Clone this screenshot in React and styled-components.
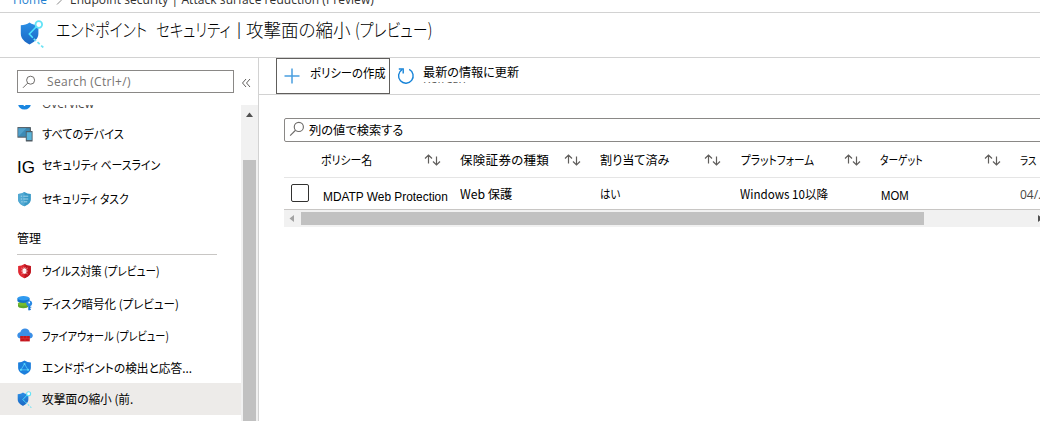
import React from "react";
import styled, { createGlobalStyle, css } from "styled-components";

const Global = createGlobalStyle`
  * { box-sizing: border-box; }
  body { margin: 0; background: #fff; color: #000; overflow: hidden;
    font-family: "Noto Sans CJK JP", sans-serif; font-size: 12px; }
`;

const jp = '"Noto Sans CJK JP", sans-serif';
const arial = '"Liberation Sans", "Noto Sans CJK JP", sans-serif';
const segoe = '"Open Sans", sans-serif';

const Text = styled.span`
  display: inline-block;
  flex: none;
  white-space: nowrap;
  line-height: 20px;
  font-family: ${(p) => p.$font || jp};
  font-size: ${(p) => p.$size || 12}px;
  font-weight: ${(p) => p.$weight || 400};
  letter-spacing: ${(p) => p.$track || 0}px;
  font-feature-settings: "palt";
  color: ${(p) => p.$color || "#000"};
  margin-top: ${(p) => p.$drop || 0}px;
  ${(p) => p.$width && css`width: ${p.$width}px;`}
  ${(p) => p.$squeeze && css`transform: scaleX(${p.$squeeze}); transform-origin: left center;`}
`;

const Page = styled.div`
  width: 1040px;
  height: 421px;
  display: flex;
  flex-direction: column;
  overflow: hidden;
`;

const Breadcrumb = styled.nav`
  height: 13px;
  flex: none;
  display: flex;
  overflow: hidden;
  border-bottom: 1px solid #d2d2d2;
  padding-left: 13px;
  & > * { margin-top: -10px; }
`;

const CrumbArrow = styled.svg`
  width: 6px;
  height: 9px;
  margin: -4px 8px 0 9px;
`;

const Header = styled.header`
  height: 45px;
  flex: none;
  display: flex;
  border-bottom: 1px solid #d2d2d2;
  padding: 7px 0 0 20px;
`;

const Title = styled.h1`
  margin: -1px 0 0 12px;
  font-weight: 400;
  display: flex;
  height: 20px;
`;

const Body = styled.div`
  flex: 1;
  min-height: 0;
  display: flex;
`;

const Sidebar = styled.aside`
  width: 259px;
  flex: none;
  border-right: 1px solid #d2d2d2;
  display: flex;
  flex-direction: column;
`;

const SearchRow = styled.div`
  height: 47px;
  flex: none;
  padding: 12px 0 0 17px;
  display: flex;
`;

const SearchBox = styled.div`
  width: 217px;
  height: 23px;
  border: 1px solid #8a8886;
  display: flex;
  align-items: center;
  padding-left: 4px;
  gap: 11px;
`;

const Collapse = styled.svg`
  width: 10px;
  height: 10px;
  margin: 8px 0 0 7px;
`;

const NavArea = styled.div`
  flex: 1;
  min-height: 0;
  display: flex;
`;

const NavList = styled.div`
  width: 241px;
  flex: none;
  overflow: hidden;
`;

const NavItem = styled.div`
  height: ${(p) => p.$height || 32}px;
  display: flex;
  align-items: center;
  padding-left: 17px;
  background: ${(p) => (p.$active ? "#edebe9" : "transparent")};
  ${(p) => p.$clipped && css`align-items: flex-start; overflow: hidden; & > * { margin-top: -11px; }`}
`;

const IconSlot = styled.span`
  width: 25px;
  height: 20px;
  flex: none;
  display: flex;
  align-items: center;
  & > svg { display: block; }
`;

const Section = styled.div`
  width: 200px;
  height: 39px;
  margin: 0 0 0 17px;
  padding-top: 12px;
  border-bottom: 1px solid #c8c6c4;
`;

const VScroll = styled.div`
  width: 17px;
  background: #f1f1f1;
  display: flex;
  flex-direction: column;
  align-items: center;
  padding-top: 7px;
`;

const VThumb = styled.div`
  width: 13px;
  flex: 1;
  margin-top: 43px;
  background: #c1c1c1;
`;

const Content = styled.main`
  flex: 1;
  min-width: 0;
`;

const Toolbar = styled.div`
  height: 37px;
  display: flex;
  border-bottom: 1px solid #d2d2d2;
  padding-left: 17px;
`;

const CreateButton = styled.div`
  width: 114px;
  height: 36px;
  border: 1px solid #605e5c;
  display: flex;
  align-items: flex-start;
  padding: 4px 0 0 7px;
  & > svg { flex: none; margin: 5px 10px 0 0; }
`;

const RefreshButton = styled.div`
  display: flex;
  align-items: flex-start;
  padding: 4px 0 0 7px;
  & > svg { margin: 5px 8px 0 0; }
`;

const RefreshLabels = styled.div`
  display: flex;
  flex-direction: column;
`;

const Remnant = styled.div`
  height: 2px;
  overflow: hidden;
  display: flex;
  align-items: flex-end;
  & > * { margin-bottom: -5px; }
`;

const Grid = styled.div`
  margin: 23px 0 0 25px;
  overflow: hidden;
`;

const FilterBox = styled.div`
  width: 780px;
  height: 24px;
  border: 1px solid #8a8886;
  border-radius: 2px;
  display: flex;
  align-items: center;
  padding-left: 4px;
  & > svg { margin: -2px 4px 0 0; }
`;

const Row = styled.div`
  width: 780px;
  height: ${(p) => p.$height}px;
  display: flex;
  align-items: center;
  border-bottom: 1px solid ${(p) => p.$line};
`;

const CheckCell = styled.div`
  width: 37px;
  flex: none;
  padding-left: 7px;
`;

const CheckBox = styled.div`
  width: 18px;
  height: 18px;
  margin-top: -1px;
  border: 1px solid #323130;
  border-radius: 2px;
`;

const Cell = styled.div`
  width: ${(p) => p.$width || 140}px;
  flex: none;
  display: flex;
  align-items: center;
  justify-content: space-between;
  padding: 0 19px 0 ${(p) => p.$indent || 0}px;
`;

const HScroll = styled.div`
  width: 780px;
  height: 17px;
  background: #f1f1f1;
  display: flex;
  align-items: center;
  padding-left: 5px;
`;

const HThumb = styled.div`
  width: 623px;
  height: 13px;
  margin: 0 114px 0 7px;
  background: #c1c1c1;
`;

const shieldPath = "M8 .6C6 2 3.6 2.6 1.2 2.7v5.5c0 3.7 3.2 6 6.8 7.6 3.600-1.600 6.800-3.900 6.800-7.600V2.700C12.400 2.600 10 2 8 .6z";

const AttackIcon = ({ width, height, id }) => (
  <svg width={width} height={height} viewBox="0 0 24 28">
    <defs>
      <linearGradient id={id} x2="0" y2="1">
        <stop offset="0" stopColor="#2a8fe6" />
        <stop offset="1" stopColor="#1b68c4" />
      </linearGradient>
    </defs>
    <path d="M9.500 2.500C7 4.300 4 5 .8 5.200v8.300c0 5.300 4.200 8.700 8.700 11 4.500-2.300 8.900-5.700 8.900-11V5.200C15.200 5 12 4.300 9.500 2.500z" fill={`url(#${id})`} />
    <path d="M16.300 6.800 9.300 14l3.500 3.800" fill="none" stroke="#50e6ff" strokeWidth="1.500" />
    <path d="m13.800 18.800 9.500 8.700" fill="none" stroke="#6fe3f5" strokeWidth="1.700" strokeDasharray="3 2" />
    <circle cx="18.800" cy="4.500" r="3.300" fill="#fff" stroke="#63e3f7" strokeWidth="1.800" />
  </svg>
);

const DevicesIcon = () => (
  <svg width="16" height="16" viewBox="0 0 16 16">
    <rect x=".4" y="1" width="13.600" height="10.800" rx=".6" fill="#59646c" />
    <rect x="1.400" y="2.200" width="11.400" height="8.400" fill="#3c8ab5" />
    <path d="M1.400 10.600V2.200h8z" fill="#51a2cc" />
    <rect x="8.800" y="5" width="6.800" height="10.600" rx=".6" fill="#4f5d66" />
    <rect x="9.700" y="6.200" width="5" height="7.800" fill="#59b4d9" />
  </svg>
);

const TasksIcon = () => (
  <svg width="15" height="16" viewBox="0 0 16 16">
    <path d={shieldPath} fill="#3999c6" />
    <path d="M8 .6v15.200C4.400 14.200 1.200 12 1.200 8.200V2.700C3.600 2.600 6 2 8 .6z" fill="#52a9d3" />
    <path d="M4 5h1.500M6.700 5H12M4 8h1.500M6.700 8H12M4.500 11H6m1.200 0h3.800" stroke="#b5def0" strokeWidth=".9" />
  </svg>
);

const AntivirusIcon = () => (
  <svg width="15" height="16" viewBox="0 0 16 16">
    <path d={shieldPath} fill="#e02832" />
    <path d="M8 .6v15.200c3.600-1.600 6.800-3.900 6.800-7.600V2.700C12.400 2.600 10 2 8 .6z" fill="#bd1620" />
    <ellipse cx="8" cy="8" rx="2.100" ry="3" fill="#fff" />
    <path d="m4.600 4.800 2 1.700m4.800-1.700-2 1.700M4.200 8h7.600M4.700 11.200l2-1.500m4.600 1.500-2-1.500M7 4l1 1.500L9 4" fill="none" stroke="#f6c9cb" strokeWidth=".7" />
  </svg>
);

const DiskIcon = () => (
  <svg width="16" height="16" viewBox="0 0 16 16">
    <path d="M1 8.500v2.800c0 1.200 2.500 2 5.300 2s5-.8 5-2V8.500z" fill="#5fa62b" />
    <ellipse cx="6.200" cy="8.700" rx="5.300" ry="2" fill="#76bc2d" />
    <path d="M.4 3.200v2.600c0 1.200 2.700 2.100 6 2.100s6.200-.9 6.200-2.100V3.200z" fill="#1272c8" />
    <ellipse cx="6.500" cy="3.200" rx="6.100" ry="2.200" fill="#2f9af0" />
    <path d="M12.200 9.500v5.800" stroke="#1676d2" strokeWidth="1.900" />
    <path d="M12.500 12.200h1.800M12.500 14.300h1.500" stroke="#1676d2" />
    <circle cx="12.200" cy="8.300" r="2.900" fill="#2889e4" />
    <circle cx="12.200" cy="7.500" r=".9" fill="#fff" />
  </svg>
);

const FirewallIcon = () => (
  <svg width="16" height="16" viewBox="0 0 16 16">
    <path d="M3.800 11.500C1.800 11.500.3 10.200.3 8.400c0-1.700 1.300-3 3-3.200C3.800 3 5.700 1.500 8 1.500c2.400 0 4.300 1.600 4.700 3.900 1.800.2 3.100 1.400 3.100 3.100 0 1.800-1.500 3-3.300 3z" fill="#3a8ee6" />
    <rect x="3.200" y="9" width="9.600" height="5.400" fill="#c5161d" />
    <path d="M3.200 11.600h9.600M6.300 9v2.600m3.400-2.600v2.600M8 11.600v2.800" stroke="#e0474d" strokeWidth=".4" />
  </svg>
);

const DetectIcon = () => (
  <svg width="15" height="17" viewBox="0 0 16 16">
    <path d={shieldPath} fill="#1c7fdc" />
    <path d="M8 4.300 4.200 10.500h7.600z" fill="none" stroke="#4cc3f5" />
    <circle cx="8" cy="4.300" r="1.100" fill="#5ad8fa" />
    <circle cx="4.200" cy="10.500" r="1.100" fill="#5ad8fa" />
    <circle cx="11.800" cy="10.500" r="1.100" fill="#5ad8fa" />
  </svg>
);

const InfoIcon = () => (
  <svg width="16" height="20" viewBox="0 0 16 20">
    <circle cx="7.500" cy="9" r="6.600" fill="#1a86e0" />
    <path d="M7.500 7v5" stroke="#fff" strokeWidth="1.600" />
  </svg>
);

const SearchIcon = ({ size = 14 }) => (
  <svg width={size} height={size} viewBox="0 0 14 14" fill="none" stroke="#6e6c6a" strokeWidth="1">
    <circle cx="8.600" cy="5.200" r="4" />
    <path d="M5.700 8.100 1 12.800" />
  </svg>
);

const SortIcon = () => (
  <svg width="17" height="12" viewBox="0 0 17 12" fill="none" stroke="#605e5c" strokeWidth="1.200">
    <path d="M4.500 9.500V1M1 4.500 4.500 1 8 4.500M12.500 2.500V11M9 7.500l3.500 3.500L16 7.500" />
  </svg>
);

const PlusIcon = () => (
  <svg width="16" height="16" viewBox="0 0 16 16">
    <path d="M8 .5v15M.5 8h15" stroke="#4a9fe0" strokeWidth="1.500" />
  </svg>
);

const RefreshIcon = () => (
  <svg width="18" height="18" viewBox="0 0 18 18" fill="none" stroke="#1683d8" strokeWidth="1.400">
    <path d="M12.200 2.400A7.300 7.300 0 1 1 5 2.700" />
    <path d="M1.800 2h4.400v4.400" />
  </svg>
);

const columns = [
  { label: "ポリシー名", squeeze: 0.91, indent: 0, size: 12 },
  { label: "保険証券の種類", size: 12.5, track: 0.3 },
  { label: "割り当て済み", size: 12.5, squeeze: 0.97 },
  { label: "プラットフォーム", size: 12, squeeze: 0.89, indent: 1 },
  { label: "ターゲット", size: 12, squeeze: 0.81 },
  { label: "ラス", size: 11, squeeze: 0.86 },
];

const manageItems = [
  { label: "ウイルス対策 (プレビュー)", icon: <AntivirusIcon />, squeeze: 0.885 },
  { label: "ディスク暗号化 (プレビュー)", icon: <DiskIcon />, squeeze: 0.96, drop: 1 },
  { label: "ファイアウォール (プレビュー)", icon: <FirewallIcon />, squeeze: 0.845, drop: 1 },
  { label: "エンドポイントの検出と応答...", icon: <DetectIcon />, squeeze: 0.975, drop: 1 },
  { label: "攻撃面の縮小 (前.", icon: <AttackIcon id="attack-nav" width={15} height={17} />, active: true, squeeze: 0.975 },
];

export default function App() {
  return (
    <>
      <Global />
      <Page>
        <Breadcrumb>
          <Text $font={segoe} $color="#1f7fd0">Home</Text>
          <CrumbArrow viewBox="0 0 6 9" fill="none" stroke="#888">
            <path d="M1 .5 5 4.500 1 8.500" />
          </CrumbArrow>
          <Text $font={segoe} $track={0.06} $color="#323130">
            Endpoint security | Attack surface reduction (Preview)
          </Text>
        </Breadcrumb>
        <Header>
          <AttackIcon id="attack-title" width={24} height={28} />
          <Title>
            <Text $size={18} $weight={300} $width={100} $squeeze={0.825}>エンドポイント</Text>
            <Text $size={18} $weight={300} $width={81} $squeeze={0.8}>セキュリティ</Text>
            <Text $size={15} $width={9} $color="#123">|</Text>
            <Text $size={18} $weight={300} $width={109} $squeeze={0.975}>攻撃面の縮小</Text>
            <Text $size={18} $weight={300} $squeeze={0.83}>(プレビュー)</Text>
          </Title>
        </Header>
        <Body>
          <Sidebar>
            <SearchRow>
              <SearchBox>
                <SearchIcon />
                <Text $font={segoe} $track={0.3} $color="#767472">Search (Ctrl+/)</Text>
              </SearchBox>
              <Collapse viewBox="0 0 10 10" fill="none" stroke="#605e5c">
                <path d="M5 1 1.500 5 5 9M9 1 5.500 5 9 9" />
              </Collapse>
            </SearchRow>
            <NavArea>
              <NavList>
                <NavItem $height={13} $clipped>
                  <IconSlot><InfoIcon /></IconSlot>
                  <Text $font={segoe} $color="#484644">Overview</Text>
                </NavItem>
                <NavItem>
                  <IconSlot><DevicesIcon /></IconSlot>
                  <Text $squeeze={0.93}>すべてのデバイス</Text>
                </NavItem>
                <NavItem>
                  <IconSlot><Text $font={arial} $size={17} $drop={4}>IG</Text></IconSlot>
                  <Text $squeeze={0.905} $drop={-3}>セキュリティ ベースライン</Text>
                </NavItem>
                <NavItem $height={34}>
                  <IconSlot><TasksIcon /></IconSlot>
                  <Text $squeeze={0.895}>セキュリティ タスク</Text>
                </NavItem>
                <Section><Text>管理</Text></Section>
                {manageItems.map((item) => (
                  <NavItem key={item.label} $active={item.active}>
                    <IconSlot>{item.icon}</IconSlot>
                    <Text $squeeze={item.squeeze} $drop={item.drop}>{item.label}</Text>
                  </NavItem>
                ))}
              </NavList>
              <VScroll>
                <svg width="7" height="5" viewBox="0 0 7 5"><path d="M0 5 3.500.5 7 5z" fill="#505050" /></svg>
                <VThumb />
              </VScroll>
            </NavArea>
          </Sidebar>
          <Content>
            <Toolbar>
              <CreateButton>
                <PlusIcon />
                <Text $size={12.5} $squeeze={0.91}>ポリシーの作成</Text>
              </CreateButton>
              <RefreshButton>
                <RefreshIcon />
                <RefreshLabels>
                  <Text $size={12.5} $squeeze={0.97}>最新の情報に更新</Text>
                  <Remnant><Text $font={segoe} $color="#605e5c">Refresh</Text></Remnant>
                </RefreshLabels>
              </RefreshButton>
            </Toolbar>
            <Grid>
              <FilterBox>
                <SearchIcon size={16} />
                <Text $size={12.5} $squeeze={0.98}>列の値で検索する</Text>
              </FilterBox>
              <Row $height={36} $line="#e5e5e5">
                <CheckCell />
                {columns.map((c, i) => (
                  <Cell key={c.label} $indent={c.indent} $width={i === 0 ? 139 : 140}>
                    <Text $size={c.size} $squeeze={c.squeeze} $track={c.track}>{c.label}</Text>
                    {i < 5 && <SortIcon />}
                  </Cell>
                ))}
              </Row>
              <Row $height={32} $line="#c8c6c4">
                <CheckCell><CheckBox /></CheckCell>
                <Cell $width={139} $indent={2}><Text $font={arial} $squeeze={0.99} $drop={6}>MDATP Web Protection</Text></Cell>
                <Cell><Text $size={12.5} $squeeze={0.98} $drop={1}>Web 保護</Text></Cell>
                <Cell><Text $squeeze={0.87}>はい</Text></Cell>
                <Cell><Text $size={12.5} $squeeze={0.93}>Windows 10以降</Text></Cell>
                <Cell $indent={1}><Text $font={arial} $squeeze={0.94} $drop={4}>MOM</Text></Cell>
                <Cell><Text $font={segoe} $color="#484644" $drop={3}>04/.</Text></Cell>
              </Row>
              <HScroll>
                <svg width="5" height="7" viewBox="0 0 5 7"><path d="M5 0 .5 3.500 5 7z" fill="#a3a3a3" /></svg>
                <HThumb />
                <svg width="5" height="7" viewBox="0 0 5 7"><path d="M0 0 4.500 3.500 0 7z" fill="#505050" /></svg>
              </HScroll>
            </Grid>
          </Content>
        </Body>
      </Page>
    </>
  );
}
